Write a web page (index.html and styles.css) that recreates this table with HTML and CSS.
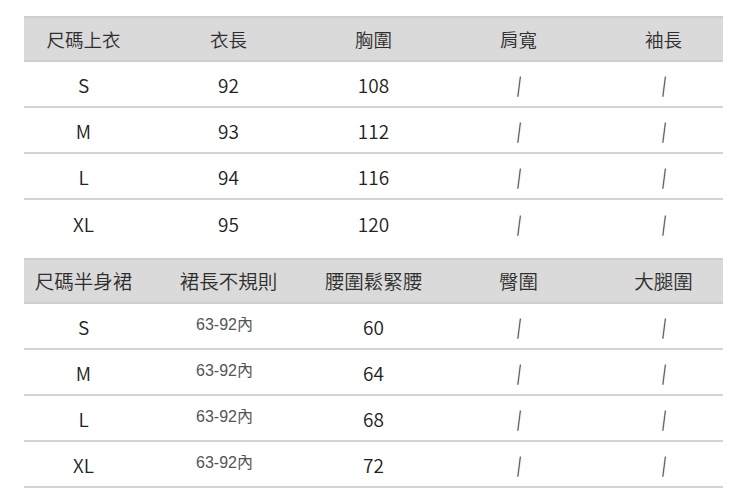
FILE: index.html
```html
<!DOCTYPE html>
<html lang="zh-Hant">
<head>
<meta charset="utf-8">
<title>尺碼表</title>
<link rel="stylesheet" href="styles.css">
</head>
<body>
<main class="page">
  <section class="size-table">
    <div class="row head">
      <div class="cells"><span>尺碼上衣</span><span>衣長</span><span>胸圍</span><span>肩寬</span><span>袖長</span></div>
    </div>
    <div class="row"><div class="cells"><span>S</span><span>92</span><span>108</span><span class="slash">/</span><span class="slash">/</span></div></div>
    <div class="row"><div class="cells"><span>M</span><span>93</span><span>112</span><span class="slash">/</span><span class="slash">/</span></div></div>
    <div class="row"><div class="cells"><span>L</span><span>94</span><span>116</span><span class="slash">/</span><span class="slash">/</span></div></div>
    <div class="row last"><div class="cells"><span>XL</span><span>95</span><span>120</span><span class="slash">/</span><span class="slash">/</span></div></div>
  </section>

  <section class="size-table second">
    <div class="row head head-lg">
      <div class="cells"><span>尺碼半身裙</span><span>裙長不規則</span><span>腰圍鬆緊腰</span><span>臀圍</span><span>大腿圍</span></div>
    </div>
    <div class="row"><div class="cells"><span>S</span><span class="small">63-92內</span><span>60</span><span class="slash">/</span><span class="slash">/</span></div></div>
    <div class="row"><div class="cells"><span>M</span><span class="small">63-92內</span><span>64</span><span class="slash">/</span><span class="slash">/</span></div></div>
    <div class="row"><div class="cells"><span>L</span><span class="small">63-92內</span><span>68</span><span class="slash">/</span><span class="slash">/</span></div></div>
    <div class="row"><div class="cells"><span>XL</span><span class="small">63-92內</span><span>72</span><span class="slash">/</span><span class="slash">/</span></div></div>
  </section>
</main>
</body>
</html>
```

FILE: styles.css
```css
html, body {
  margin: 0;
  padding: 0;
  background: #ffffff;
}

body {
  font-family: "Noto Sans CJK TC", "Noto Sans", sans-serif;
  color: #222222;
}

.page {
  padding: 16px 0 0 24px;
  display: flex;
  flex-direction: column;
  gap: 12px;
}

.size-table {
  width: 699px;
  display: flex;
  flex-direction: column;
}

.row {
  height: 46px;
  box-sizing: border-box;
  border-bottom: 2px solid #d4d4d4;
}

.row.last {
  border-bottom: none;
}

.row.head {
  background: #dadada;
  border-top: 2px solid #cecece;
  border-bottom: 2px solid #cecece;
  color: #2e2e2e;
}

.cells {
  display: grid;
  grid-template-columns: repeat(5, 145px);
  margin: 0 -13px;
  height: 100%;
  align-items: center;
  font-size: 19px;
  font-weight: 350;
  line-height: 1;
}

.cells span {
  text-align: center;
  white-space: nowrap;
}

.head .cells {
  font-size: 18.5px;
}

.head-lg .cells {
  font-size: 19.5px;
}

.slash {
  color: #333333;
  font-weight: 300;
  font-size: 21px;
  transform: skewX(12deg);
}

.cells .small {
  font-size: 16px;
  color: #555555;
  font-family: "Liberation Sans", "Noto Sans CJK TC", sans-serif;
  font-weight: 400;
  padding-right: 8px;
  margin-top: -3px;
}
```
